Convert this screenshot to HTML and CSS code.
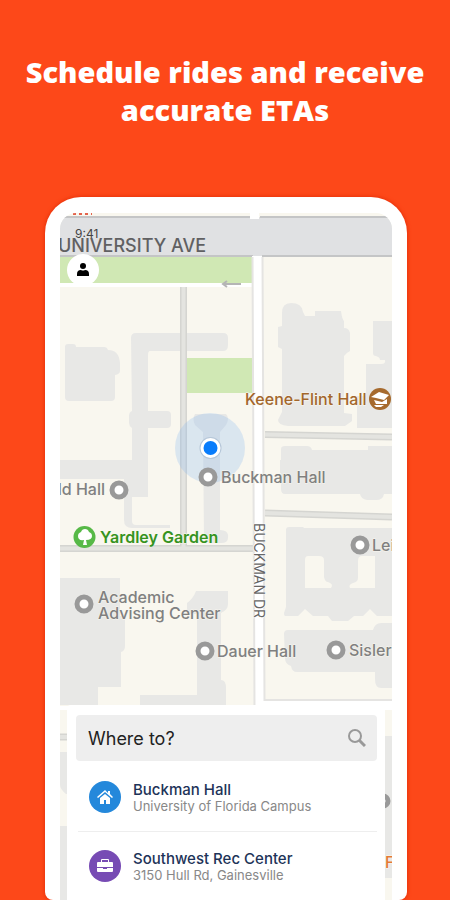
FILE: index.html
```html
<!DOCTYPE html>
<html lang="en">
<head>
    <meta charset="UTF-8">
    <meta name="viewport" content="width=device-width, initial-scale=1.0">
    <title>Schedule rides and receive accurate ETAs</title>
    <link rel="stylesheet" href="styles.css">
</head>
<body>
    <main class="page">
        <h1>Schedule rides and receive accurate ETAs</h1>

        <section class="phone">
            <div class="screen">

                <!-- Campus map -->
                <svg class="map" viewBox="60 213 332 687" preserveAspectRatio="xMidYMin slice" role="img" aria-label="Campus map">
                    <rect x="60" y="213" width="332" height="687" fill="#f9f7ef"/>

                    <!-- Parks -->
                    <rect x="60" y="256" width="193" height="27" fill="#d0e8b4"/>
                    <rect x="186" y="358" width="67" height="35" fill="#d0e8b4"/>

                    <!-- Buildings -->
                    <g class="building">
                        <path d="M65 347q0-3 3-3h5q3 0 3 3h28q3 0 4 3 11 0 12 13v8q0 3-5 4v22q0 4-4 4H69q-4 0-4-4z"/>
                        <path d="M131 338q0-5 5-5h87q5 0 5 5v7q0 6-5 6h-73q-2 0-2 4v56h19q4 0 4 4v9q0 4-4 4h-19v69h-16v24q0 4 4 4h34v3h-38q-8 0-8-8v-41H60v-19h72v-32q-3-2-3-5v-7q0-4 3-5z"/>
                        <path d="M195 414h31q4 4 0 11l-6 7v98q9 0 8 8 0 5-7 5h-12l-5-4-1-107-8-7q-3-6 0-11z"/>
                        <path d="M282 313q0-10 9-10 11 0 12 9l2 4h10v-5h26q1 8 3 10v7q5 0 6 5v18q-4 2-6 5v57l8 1v7l-7 5h-57q-10-1-10-6l4-8v-63l-4-2v-20l4-1z"/>
                        <path d="M373 321h19v107h-35v-32h9v-32h15q5 0 4-4h-5q0-3-4-4-3 0-3-3z"/>
                        <path d="M281 449q0-3 4-3h22q4 0 5 4h56v-4h24v48h-8q-1 6-8 6h-9q-6-1-7-6h-75q-4 0-4-5v-16h-1v-13h1z"/>
                        <path fill-rule="evenodd" d="M286 530q0-3 3-3h14l1 1h88v88h-15l-7-7-7 7h-9l-6 5h-16l-4-5h-15l-8-7-7 7h-13q-1 0-1-3l2-6zM308 556q-3 0-3 4v28h26q3-4-3-6-3 0-4-5v-17q0-4-5-4zM362 556q-4 0-4 5v17q0 4-5 5-5 2-3 5h25v-32z"/>
                        <path d="M284 634q0-4 4-4h85q2-7 8-7h11v65h-11q-6 0-6-9v-7h-78q-5 0-6-6-6-2-6-8z"/>
                        <path d="M60 578h60v38h5v30q0 5-4 6v35H98v18H60z"/>
                        <path d="M187 603q6-4 9-12h32v13q0 6-7 9v67q5 0 5 8v17h-86v-10h57v-81h-9q-3-2-1-5z"/>
                        <path d="M60 752h20v42h-14q-6-5-6-9zM60 826h10v74H60zM385 736h7v142h-7z"/>
                    </g>

                    <!-- Footpaths -->
                    <g class="path">
                        <path d="M183.500 287V550M60 548.500h193M265 434.500l127 2.500M265 513l127 4M60 737h12"/>
                    </g>
                    <g class="path-inner">
                        <path d="M183.500 287V550M60 548.500h193M265 434.500l127 2.500M265 513l127 4M60 737h12"/>
                    </g>

                    <!-- Streets -->
                    <rect x="60" y="283" width="193" height="4" fill="#fff"/>
                    <rect x="60" y="217" width="332" height="39" fill="#e0e1e3"/>
                    <path d="M60 217h190M260 217h132M60 256h193M262 256h130" stroke="#c4c5c6" stroke-width="2"/>
                    <path d="M250 213h9v6h-9z" fill="#fff"/>
                    <path d="M252 256h10l3 445h127v9H60v-4h194z" fill="#fff"/>
                    <path d="M252.500 257l2 449M262.500 257l2 443H392" fill="none" stroke="#e5e4e2" stroke-width="2"/>
                    <path d="M241 284h-18m4-3l-4 3 4 3" fill="none" stroke="#b5b5b5" stroke-width="2"/>
                    <path d="M73 214h19" stroke="#e4634c" stroke-width="2" stroke-dasharray="3 3"/>

                    <!-- Current location -->
                    <circle cx="210" cy="448" r="35" fill="#7fb2ef" fill-opacity=".25"/>
                    <circle cx="210.500" cy="448" r="11" fill="#b5c6d8"/>
                    <circle cx="210.500" cy="448" r="10" fill="#fff"/>
                    <circle cx="210.500" cy="448" r="7" fill="#087cfb"/>

                    <!-- Pins -->
                    <g class="pin">
                        <circle cx="208" cy="477" r="7"/>
                        <circle cx="119" cy="490" r="7"/>
                        <circle cx="360" cy="545" r="7"/>
                        <circle cx="84" cy="604" r="7"/>
                        <circle cx="205" cy="651" r="7"/>
                        <circle cx="336" cy="650" r="7"/>
                        <circle cx="383" cy="801" r="5"/>
                    </g>
                    <circle cx="380" cy="399" r="11" fill="#a66a2e"/>
                    <path d="M371 397l8-5 10 3-5 5-8-2zM374 400l8 2 5-3v5h-11zM374 405h10l-3 2h-5z" fill="#fff"/>
                    <circle cx="84.500" cy="537" r="11" fill="#57b947"/>
                    <path d="M83 545l1-5q-6 1-6-4 0-3 3-4 1-3 4-3t4 3q3 1 3 4 0 4-6 4l1 5z" fill="#fff"/>

                    <!-- Labels -->
                    <g class="label">
                        <text class="street" x="58" y="252">UNIVERSITY AVE</text>
                        <text class="side-street" transform="translate(254 523) rotate(90)">BUCKMAN DR</text>
                        <text class="brown" x="245" y="405">Keene-Flint Hall</text>
                        <text x="221" y="483">Buckman Hall</text>
                        <text x="105" y="495" text-anchor="end">Fjeld Hall</text>
                        <text class="green" x="100" y="543">Yardley Garden</text>
                        <text x="372" y="551">Leigh</text>
                        <text x="98" y="603">Academic</text>
                        <text x="98" y="619">Advising Center</text>
                        <text x="217" y="657">Dauer Hall</text>
                        <text x="349" y="656">Sisler Hall</text>
                        <text class="orange" x="385" y="868">F</text>
                    </g>
                </svg>

                <header class="status">
                    <time>9:41</time>
                    <button class="profile" type="button" aria-label="Profile">
                        <svg viewBox="0 0 16 16" width="16" height="16">
                            <circle cx="8" cy="4" r="3"/>
                            <path d="M2 14v-2q0-4 4-4 2 1 4 0 4 0 4 4v2z"/>
                        </svg>
                    </button>
                </header>

                <div class="panel">
                    <form class="search">
                        <input type="text" aria-label="Where to?" placeholder="Where to?">
                        <button type="submit" aria-label="Search">
                            <svg viewBox="0 0 18 18" width="18" height="18">
                                <circle cx="7" cy="7" r="6"/>
                                <path d="M11 11l6 6"/>
                            </svg>
                        </button>
                    </form>

                    <ul class="places">
                        <li>
                            <a href="#">
                                <span class="icon home">
                                    <svg viewBox="0 0 16 16" width="16" height="16">
                                        <path d="M0 8l8-7 3 3V2h2v3l3 3-1 1-7-6-7 6z"/>
                                        <path d="M3 9l5-4 5 4v6H9v-4H7v4H3z"/>
                                    </svg>
                                </span>
                                <span class="text">
                                    <strong>Buckman Hall</strong>
                                    <small>University of Florida Campus</small>
                                </span>
                            </a>
                        </li>
                        <li>
                            <a href="#">
                                <span class="icon work">
                                    <svg viewBox="0 0 16 16" width="16" height="16">
                                        <path fill-rule="evenodd" d="M4 4V2q0-1 1-1h6q1 0 1 1v2h3q1 0 1 1v4H0V5q0-1 1-1zM5 4h6V2H5z"/>
                                        <path d="M0 10h6v1h4v-1h6v3q0 1-1 1H1q-1 0-1-1z"/>
                                    </svg>
                                </span>
                                <span class="text">
                                    <strong>Southwest Rec Center</strong>
                                    <small>3150 Hull Rd, Gainesville</small>
                                </span>
                            </a>
                        </li>
                    </ul>
                </div>
            </div>
        </section>
    </main>
</body>
</html>
```
FILE: styles.css
```css
* {
    box-sizing: border-box;
}

body {
    margin: 0;
    font-family: Inter, "Liberation Sans", sans-serif;
    background-color: #fd4819;
}

.page {
    display: flex;
    flex-direction: column;
    min-height: 100vh;
    padding-top: 53px;
}

h1 {
    margin: 0 16px 68px;
    color: white;
    font-family: "Open Sans", sans-serif;
    font-size: 29px;
    font-weight: 800;
    line-height: 38px;
    text-align: center;
}

/* Phone frame */
.phone {
    display: flex;
    flex: 1;
    margin: 0 43px 0 45px;
    padding: 16px 15px 0;
    background-color: white;
    border-radius: 36px 36px 8px 8px;
    box-shadow: 0 0 4px #e02a05;
}

.screen {
    position: relative;
    display: flex;
    flex: 1;
    flex-direction: column;
    justify-content: space-between;
    overflow: hidden;
    border-radius: 16px 16px 0 0;
}

/* Map */
.map {
    position: absolute;
    top: 0;
    left: 0;
    width: 100%;
    height: 100%;
}

.building {
    fill: #e8e8e6;
}

.path {
    fill: none;
    stroke: #d5d5d1;
    stroke-width: 7px;
}

.path-inner {
    fill: none;
    stroke: #e4e4e0;
    stroke-width: 4px;
}

.pin {
    fill: white;
    stroke: #999;
    stroke-width: 5px;
}

.label {
    fill: #808080;
    stroke: #f9f7ef;
    stroke-width: 1px;
    paint-order: stroke;
    font-size: 16px;
    font-weight: 500;
}

.label .street {
    fill: #606062;
    stroke: #e0e1e3;
    font-size: 18px;
}

.label .side-street {
    fill: #666;
    stroke: white;
    font-size: 14px;
    font-weight: 400;
}

.label .brown {
    fill: #a2662c;
}

.label .green {
    fill: #369321;
    font-weight: 600;
}

.label .orange {
    fill: #e37a35;
}

/* Top of the screen */
.status {
    position: relative;
    display: flex;
    flex-direction: column;
    align-items: flex-start;
    padding: 14px 7px 0;
}

.status time {
    margin-left: 8px;
    color: #444;
    font-size: 12px;
    line-height: 14px;
}

.profile {
    display: flex;
    align-items: center;
    justify-content: center;
    width: 32px;
    height: 32px;
    margin-top: 13px;
    padding: 0;
    background-color: white;
    border: 0;
    border-radius: 50%;
}

/* Destination panel */
.panel {
    position: relative;
    margin: 0 7px;
    padding: 10px 8px 0 9px;
    background-color: white;
    border-radius: 4px 4px 0 0;
}

.search {
    display: flex;
    align-items: center;
    height: 46px;
    padding: 0 11px 0 12px;
    background-color: #eee;
    border-radius: 4px;
}

.search input {
    flex: 1;
    min-width: 0;
    padding: 0;
    background: none;
    border: 0;
    color: #222;
    font-family: inherit;
    font-size: 18px;
}

.search input::placeholder {
    color: #222;
}

.search button {
    display: flex;
    padding: 0;
    background: none;
    border: 0;
}

.search svg {
    fill: none;
    stroke: #999;
    stroke-width: 2px;
}

.search path {
    stroke-width: 3px;
}

.places {
    margin: 0;
    padding: 2px 0 0 2px;
    list-style: none;
}

.places li + li {
    border-top: 1px solid #eee;
}

.places a {
    display: flex;
    align-items: center;
    gap: 12px;
    height: 68px;
    padding: 0 11px;
    text-decoration: none;
}

.icon {
    display: flex;
    align-items: center;
    justify-content: center;
    width: 32px;
    height: 32px;
    border-radius: 50%;
    fill: white;
}

.home {
    background-color: #2488db;
}

.work {
    background-color: #774bb4;
}

.text {
    display: flex;
    flex-direction: column;
}

.text strong {
    color: #1d3358;
    font-size: 15px;
    font-weight: 500;
    line-height: 17px;
}

.text small {
    color: #888;
    font-size: 13px;
    line-height: 16px;
}
```
